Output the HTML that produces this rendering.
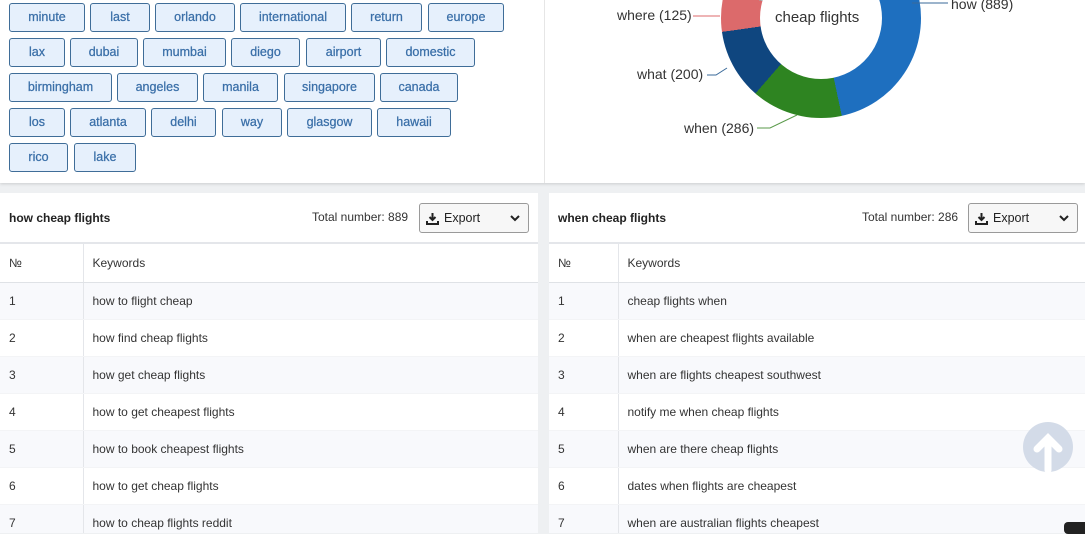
<!DOCTYPE html>
<html><head><meta charset="utf-8"><style>
*{box-sizing:border-box;margin:0;padding:0}
body{width:1085px;height:530px;overflow:hidden;background:#eef0f2;font-family:"Liberation Sans",Arial,sans-serif;position:relative;color:#222}
.top{position:absolute;left:0;top:0;width:1085px;height:183px;background:#fff;box-shadow:0 1px 3px rgba(0,0,0,.15)}
.div{position:absolute;left:544px;top:0;width:1px;height:183px;background:#e6e6e6}
.tag{position:absolute;height:29px;background:#e6f0fc;border:1px solid #3f6d98;border-radius:3px;color:#3a6fa8;font-size:12.5px;text-align:center;line-height:27px;-webkit-text-stroke:0.25px #3a6fa8}
.card{position:absolute;top:193px;background:#fff;height:340px;overflow:hidden}
.hd{height:51px;border-bottom:2px solid #e4e6ea;position:relative}
.hd .t{position:absolute;left:9px;top:18px;font-size:12px;font-weight:bold}
.hd .n{position:absolute;top:17px;font-size:12px;color:#333}
.exp{position:absolute;top:10px;width:110px;height:30px;border:1px solid #9a9a9a;border-radius:3px;background:#f7f7f7;font-size:12.5px;line-height:28px;padding-left:24px}
.exp svg{position:absolute}
table{border-collapse:collapse;width:100%;font-size:12px}
td{height:37px;padding-left:9px;border-bottom:1px solid #f3f4f6;color:#333}
td:first-child{border-right:1px solid #e4e6ea}
tr.h td{height:38px;border-bottom:1px solid #dfe2e6}
tr.o td{background:#f8f9fc}
.lbl{position:absolute;font-size:14px;color:#333}
</style></head><body>
<div class="top">
<div class="div"></div>
<div class="tag" style="left:9px;top:3px;width:76px">minute</div>
<div class="tag" style="left:90px;top:3px;width:60px">last</div>
<div class="tag" style="left:155px;top:3px;width:80px">orlando</div>
<div class="tag" style="left:240px;top:3px;width:106px">international</div>
<div class="tag" style="left:351px;top:3px;width:71px">return</div>
<div class="tag" style="left:428px;top:3px;width:76px">europe</div>
<div class="tag" style="left:9px;top:38px;width:56px">lax</div>
<div class="tag" style="left:70px;top:38px;width:68px">dubai</div>
<div class="tag" style="left:143px;top:38px;width:83px">mumbai</div>
<div class="tag" style="left:231px;top:38px;width:69px">diego</div>
<div class="tag" style="left:306px;top:38px;width:75px">airport</div>
<div class="tag" style="left:386px;top:38px;width:89px">domestic</div>
<div class="tag" style="left:9px;top:73px;width:103px">birmingham</div>
<div class="tag" style="left:117px;top:73px;width:81px">angeles</div>
<div class="tag" style="left:203px;top:73px;width:75px">manila</div>
<div class="tag" style="left:284px;top:73px;width:91px">singapore</div>
<div class="tag" style="left:380px;top:73px;width:78px">canada</div>
<div class="tag" style="left:9px;top:108px;width:56px">los</div>
<div class="tag" style="left:70px;top:108px;width:76px">atlanta</div>
<div class="tag" style="left:151px;top:108px;width:65px">delhi</div>
<div class="tag" style="left:222px;top:108px;width:60px">way</div>
<div class="tag" style="left:287px;top:108px;width:85px">glasgow</div>
<div class="tag" style="left:377px;top:108px;width:74px">hawaii</div>
<div class="tag" style="left:9px;top:143px;width:59px">rico</div>
<div class="tag" style="left:74px;top:143px;width:62px">lake</div>
<div style="position:absolute;left:721px;top:-82px;width:200px;height:200px;border-radius:50%;background:conic-gradient(#1e6fbf 0deg 168deg,#2e8421 168deg 221deg,#0f467f 221deg 262deg,#dc6a6b 262deg 286deg,#aaa 286deg 300deg,#1e6fbf 300deg)"></div>
<div style="position:absolute;left:760px;top:-43px;width:122px;height:122px;border-radius:50%;background:#fff"></div>
<div class="lbl" style="left:775px;top:9px;font-size:15px">cheap flights</div>
<svg style="position:absolute;left:0;top:0" width="1085" height="183" fill="none">
<path d="M693 16H720" stroke="#dc6a6b"/>
<path d="M707 75H716L727 68" stroke="#3a6a9a"/>
<path d="M757 128H770L797 115" stroke="#5a9a4a"/>
<path d="M912 3H948" stroke="#3a6a9a"/>
</svg>
<div class="lbl" style="left:617px;top:7px">where (125)</div>
<div class="lbl" style="left:637px;top:66px">what (200)</div>
<div class="lbl" style="left:684px;top:120px">when (286)</div>
<div class="lbl" style="left:951px;top:-4px">how (889)</div>
</div>

<div class="card" style="left:0;width:538px">
<div class="hd"><div class="t">how cheap flights</div><div class="n" style="left:312px">Total number: 889</div>
<div class="exp" style="left:419px"><svg style="left:6px;top:8px" width="13" height="13" viewBox="0 0 13 13"><path d="M6.5 1v7M3.5 5l3 3 3-3" stroke="#222" stroke-width="2" fill="none"/><path d="M1 9v3h11V9" stroke="#222" stroke-width="2" fill="none"/></svg>Export<svg style="left:90px;top:11px" width="10" height="7"><path d="M1 1l4 4 4-4" stroke="#222" stroke-width="2" fill="none"/></svg></div></div>
<table><tr class="h"><td style="width:83px">№</td><td>Keywords</td></tr>
<tr class="o"><td>1</td><td>how to flight cheap</td></tr>
<tr><td>2</td><td>how find cheap flights</td></tr>
<tr class="o"><td>3</td><td>how get cheap flights</td></tr>
<tr><td>4</td><td>how to get cheapest flights</td></tr>
<tr class="o"><td>5</td><td>how to book cheapest flights</td></tr>
<tr><td>6</td><td>how to get cheap flights</td></tr>
<tr class="o"><td>7</td><td>how to cheap flights reddit</td></tr></table>
</div>

<div class="card" style="left:549px;width:536px">
<div class="hd"><div class="t">when cheap flights</div><div class="n" style="left:313px">Total number: 286</div>
<div class="exp" style="left:419px"><svg style="left:6px;top:8px" width="13" height="13" viewBox="0 0 13 13"><path d="M6.5 1v7M3.5 5l3 3 3-3" stroke="#222" stroke-width="2" fill="none"/><path d="M1 9v3h11V9" stroke="#222" stroke-width="2" fill="none"/></svg>Export<svg style="left:90px;top:11px" width="10" height="7"><path d="M1 1l4 4 4-4" stroke="#222" stroke-width="2" fill="none"/></svg></div></div>
<table><tr class="h"><td style="width:69px">№</td><td>Keywords</td></tr>
<tr class="o"><td>1</td><td>cheap flights when</td></tr>
<tr><td>2</td><td>when are cheapest flights available</td></tr>
<tr class="o"><td>3</td><td>when are flights cheapest southwest</td></tr>
<tr><td>4</td><td>notify me when cheap flights</td></tr>
<tr class="o"><td>5</td><td>when are there cheap flights</td></tr>
<tr><td>6</td><td>dates when flights are cheapest</td></tr>
<tr class="o"><td>7</td><td>when are australian flights cheapest</td></tr></table>
</div>

<svg style="position:absolute;left:1023px;top:422px" width="50" height="50" viewBox="0 0 50 50"><circle cx="25" cy="25" r="25" fill="#d3dbe8"/><path d="M25 48V16M14 27l11-11 11 11" stroke="#fff" stroke-width="7" fill="none" stroke-linecap="round"/></svg>
<div style="position:absolute;left:1064px;top:522px;width:30px;height:12px;background:#222;border-radius:4px"></div>
</body></html>
